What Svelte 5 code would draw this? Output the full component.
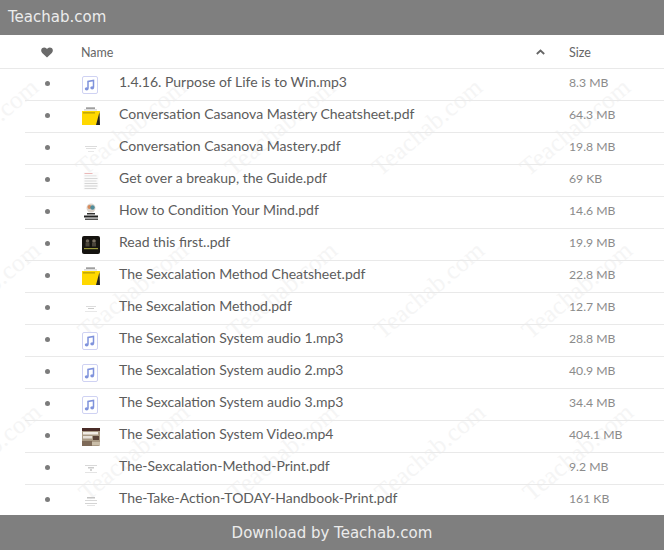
<script lang="ts">
	type Kind = 'audio' | 'yellow' | 'faintA' | 'faintB' | 'faintC' | 'faintD' | 'lines' | 'howto' | 'dark' | 'video';

	const files: { name: string; size: string; kind: Kind }[] = [
		{ name: '1.4.16. Purpose of Life is to Win.mp3', size: '8.3 MB', kind: 'audio' },
		{ name: 'Conversation Casanova Mastery Cheatsheet.pdf', size: '64.3 MB', kind: 'yellow' },
		{ name: 'Conversation Casanova Mastery.pdf', size: '19.8 MB', kind: 'faintA' },
		{ name: 'Get over a breakup, the Guide.pdf', size: '69 KB', kind: 'lines' },
		{ name: 'How to Condition Your Mind.pdf', size: '14.6 MB', kind: 'howto' },
		{ name: 'Read this first..pdf', size: '19.9 MB', kind: 'dark' },
		{ name: 'The Sexcalation Method Cheatsheet.pdf', size: '22.8 MB', kind: 'yellow' },
		{ name: 'The Sexcalation Method.pdf', size: '12.7 MB', kind: 'faintB' },
		{ name: 'The Sexcalation System audio 1.mp3', size: '28.8 MB', kind: 'audio' },
		{ name: 'The Sexcalation System audio 2.mp3', size: '40.9 MB', kind: 'audio' },
		{ name: 'The Sexcalation System audio 3.mp3', size: '34.4 MB', kind: 'audio' },
		{ name: 'The Sexcalation System Video.mp4', size: '404.1 MB', kind: 'video' },
		{ name: 'The-Sexcalation-Method-Print.pdf', size: '9.2 MB', kind: 'faintC' },
		{ name: 'The-Take-Action-TODAY-Handbook-Print.pdf', size: '161 KB', kind: 'faintD' }
	];

	// watermark grid, x/y is where each word starts
	const marks: { x: number; y: number }[] = [];
	[
		[180, 0],
		[343, 1.5],
		[505, 3]
	].forEach(([y, shift]) => {
		[-61, 87, 236, 383, 531].forEach((x) => marks.push({ x: x + shift, y }));
	});
</script>

<div class="page">
	<header class="bar top">Teachab.com</header>

	<main class="list">
		<div class="marks" aria-hidden="true">
			{#each marks as m}
				<span class="mark" style="left: {m.x}px; top: {m.y - 35}px">Teachab.com</span>
			{/each}
		</div>

		<div class="row head">
			<span class="fav">
				<svg width="12" height="11" viewBox="0 0 12 11">
					<path
						d="M6 10.600 1.200 5.900C-.2 4.500-.1 2.400 1 1.300 2.200.1 4.200.1 5.300 1.300L6 2l.7-.7c1.100-1.200 3.100-1.200 4.300 0 1.100 1.100 1.200 3.200-.2 4.600z"
						fill="#6a6a6a"
					/>
				</svg>
			</span>
			<span class="col-name">Name</span>
			<span class="sort">
				<svg width="9" height="6" viewBox="0 0 9 6">
					<path d="M.8 5 4.500 1.500 8.200 5" fill="none" stroke="#666" stroke-width="1.800" />
				</svg>
			</span>
			<span class="col-size">Size</span>
		</div>

		{#each files as file}
			<div class="row item">
				<span class="fav"><i class="dot"></i></span>
				<span class="thumb" class:soft={file.kind !== 'audio'}>
					<svg width="20" height="20" viewBox="0 0 20 20">
						{#if file.kind === 'audio'}
							<rect x="1.500" y="1.500" width="15" height="17" rx="1.500" fill="#fff" stroke="#cfd2f3" />
							<path
								d="M7 13.500V6.500l5.500-1v7"
								fill="none"
								stroke="#7f92dc"
								stroke-width="1.500"
							/>
							<ellipse cx="5.700" cy="13.800" rx="1.900" ry="1.600" fill="#7f92dc" />
							<ellipse cx="11.200" cy="12.800" rx="1.900" ry="1.600" fill="#7f92dc" />
						{:else if file.kind === 'yellow'}
							<rect x="5" y="0.500" width="9" height="1.200" fill="#777" />
							<rect x="3" y="2.500" width="13" height="0.800" fill="#bbb" />
							<path d="M1 4h18l-1.500 14H1z" fill="#ffd800" />
							<path d="M18.500 5 19 18h-4z" fill="#222" />
							<rect x="2" y="5.500" width="12" height="0.800" fill="#8a7a10" />
						{:else if file.kind === 'lines'}
							<rect x="2.500" y="1" width="15" height="18" fill="#fbfbfb" />
							<rect x="3.500" y="2" width="8" height="0.800" fill="#e8a8a8" />
							<rect x="3.500" y="4.500" width="12" height="0.800" fill="#dcdcdc" />
							<rect x="3.500" y="7" width="13" height="1" fill="#d8d8d8" />
							<rect x="3.500" y="9.500" width="12" height="1" fill="#dcdcdc" />
							<rect x="3.500" y="12" width="13" height="1" fill="#d6d6d6" />
							<rect x="3.500" y="14.500" width="13" height="1" fill="#d0d0d0" />
							<rect x="3.500" y="17" width="12" height="1" fill="#d8d8d8" />
						{:else if file.kind === 'howto'}
							<circle cx="10" cy="5" r="4.500" fill="#dcd4cc" />
							<circle cx="8.500" cy="4" r="2" fill="#d88a5a" />
							<circle cx="11.500" cy="4.500" r="2.200" fill="#4f8d9c" />
							<rect x="6" y="10" width="8" height="1.500" fill="#333" />
							<rect x="3" y="12.500" width="14" height="2" fill="#222" />
							<rect x="4" y="15.500" width="13" height="1.500" fill="#555" />
						{:else if file.kind === 'dark'}
							<rect x="1" y="1" width="18" height="18" rx="2" fill="#15130f" />
							<circle cx="6.500" cy="6" r="1.800" fill="#6f675a" />
							<circle cx="13" cy="6" r="1.800" fill="#7d7364" />
							<rect x="4.500" y="7.500" width="4" height="4" fill="#4a443a" />
							<rect x="11" y="7.500" width="4" height="4" fill="#4a443a" />
							<rect x="3" y="13" width="14" height="1.200" fill="#9c9a3a" />
						{:else if file.kind === 'video'}
							<rect x="1" y="1" width="18" height="18" rx="1.500" fill="#a99a84" />
							<rect x="1" y="1" width="18" height="3" fill="#4a2c28" />
							<rect x="2" y="5" width="15" height="2.500" fill="#f1ece4" />
							<rect x="2" y="9" width="9" height="2.500" fill="#e6e0d8" />
							<rect x="12" y="9" width="6" height="4" fill="#5a4438" />
							<rect x="1" y="14" width="10" height="5" fill="#7e6a58" />
							<rect x="11" y="15" width="8" height="3" fill="#c9bda8" />
						{:else if file.kind === 'faintA'}
							<rect x="4" y="7" width="12" height="1" fill="#dcdcdc" />
							<rect x="5" y="9" width="10" height="1" fill="#e0e0e0" />
							<rect x="7" y="12" width="6" height="1" fill="#e8e8e8" />
						{:else if file.kind === 'faintB'}
							<rect x="5" y="7" width="10" height="1" fill="#dcdcdc" />
							<rect x="7" y="9" width="6" height="1" fill="#cccccc" />
							<rect x="4" y="12" width="12" height="1" fill="#e8e8e8" />
						{:else if file.kind === 'faintC'}
							<rect x="4" y="6" width="12" height="1" fill="#d8d8d8" />
							<rect x="7" y="8" width="6" height="1.500" fill="#cccccc" />
							<rect x="9" y="10" width="2" height="2" fill="#d4d4d4" />
							<rect x="4" y="13" width="12" height="1" fill="#e4e4e4" />
						{:else}
							<rect x="6" y="6" width="8" height="1.500" fill="#c4c4c4" />
							<rect x="4" y="9" width="12" height="1" fill="#d8d8d8" />
							<rect x="4" y="12" width="12" height="1" fill="#d4d4d4" />
							<rect x="6" y="14" width="8" height="1" fill="#e4e4e4" />
						{/if}
					</svg>
				</span>
				<span class="name">{file.name}</span>
				<span class="size">{file.size}</span>
			</div>
		{/each}
	</main>

	<footer class="bar bottom">Download by Teachab.com</footer>
</div>

<style>
	:global(body) {
		margin: 0;
		background: #fff;
	}
	.page {
		width: 664px;
		height: 550px;
		overflow: hidden;
		display: flex;
		flex-direction: column;
		font-family: Lato, 'Liberation Sans', sans-serif;
	}
	.bar {
		background: #7f7f7f;
		color: #ececec;
		height: 35px;
		flex: none;
		display: flex;
		align-items: center;
		font-family: 'DejaVu Sans', sans-serif;
		font-size: 15px;
	}
	.top {
		padding-left: 8px;
		padding-bottom: 1px;
		box-sizing: border-box;
	}
	.bottom {
		justify-content: center;
		padding-top: 1px;
		box-sizing: border-box;
		position: relative;
		z-index: 2;
	}
	.list {
		flex: 1;
		min-height: 0;
		position: relative;
		overflow: hidden;
	}
	.marks {
		position: absolute;
		inset: 0;
		pointer-events: none;
	}
	.mark {
		position: absolute;
		transform-origin: 0 100%;
		transform: translateY(-100%) rotate(-40deg);
		font-family: 'Liberation Serif', serif;
		font-size: 25px;
		line-height: 1;
		letter-spacing: 0.3px;
		white-space: nowrap;
		color: #f5f5f5;
	}
	.row {
		position: relative;
		display: grid;
		grid-template-columns: 56px 38px 450px 1fr;
		align-items: center;
		box-sizing: border-box;
		margin-left: 25px;
		border-bottom: 1px solid #e9e9e9;
	}
	.head {
		height: 34px;
		margin-left: 0;
		padding-left: 25px;
		padding-top: 1px;
		grid-template-columns: 56px 450px 38px 1fr;
		font-size: 12.500px;
		color: #666;
	}
	.item {
		height: 32px;
		color: #666;
	}
	.fav {
		display: flex;
		justify-content: center;
		width: 44px;
	}
	.sort {
		display: flex;
		padding-left: 5px;
	}
	.dot {
		width: 5px;
		height: 5px;
		border-radius: 50%;
		background: #7c7c7c;
		margin-bottom: 2px;
	}
	.thumb {
		display: flex;
		height: 20px;
	}
	.soft svg {
		filter: blur(0.35px);
	}
	.name {
		font-size: 14px;
		color: #5c5c5c;
		padding-bottom: 7px;
		white-space: nowrap;
	}
	.size {
		font-size: 12.200px;
		color: #8b8b8b;
		padding-bottom: 5px;
		white-space: nowrap;
	}
</style>
